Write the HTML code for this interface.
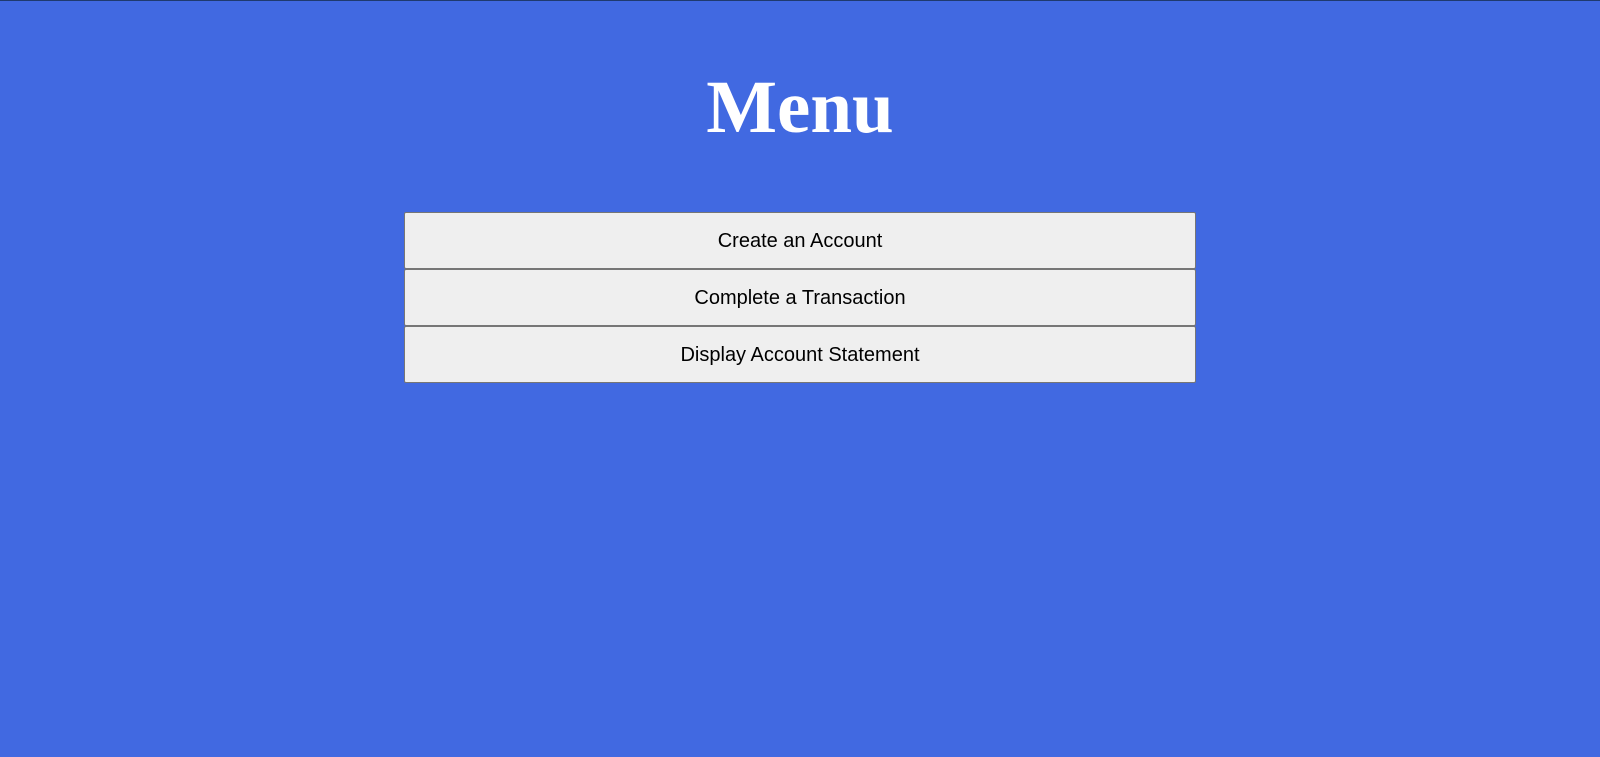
<!DOCTYPE html>
<html><head><style>
html,body{margin:0;padding:0}
body{width:1600px;height:757px;background:#4169E1;border-top:1px solid #1f3a6e;box-sizing:border-box;overflow:hidden;position:relative}
h1{position:absolute;top:62px;left:0;width:1600px;margin:0;text-align:center;color:#fff;font:bold 75px "Liberation Serif",serif;line-height:90px}
.b{position:absolute;left:404px;width:792px;height:57px;box-sizing:border-box;background:#efefef;border:1px solid #767676;border-radius:2px;font:20px "Liberation Sans",sans-serif;color:#000;text-align:center;line-height:56px}
</style></head><body>
<h1>Menu</h1>
<div class="b" style="top:211px">Create an Account</div>
<div class="b" style="top:268px">Complete a Transaction</div>
<div class="b" style="top:325px">Display Account Statement</div>
</body></html>
